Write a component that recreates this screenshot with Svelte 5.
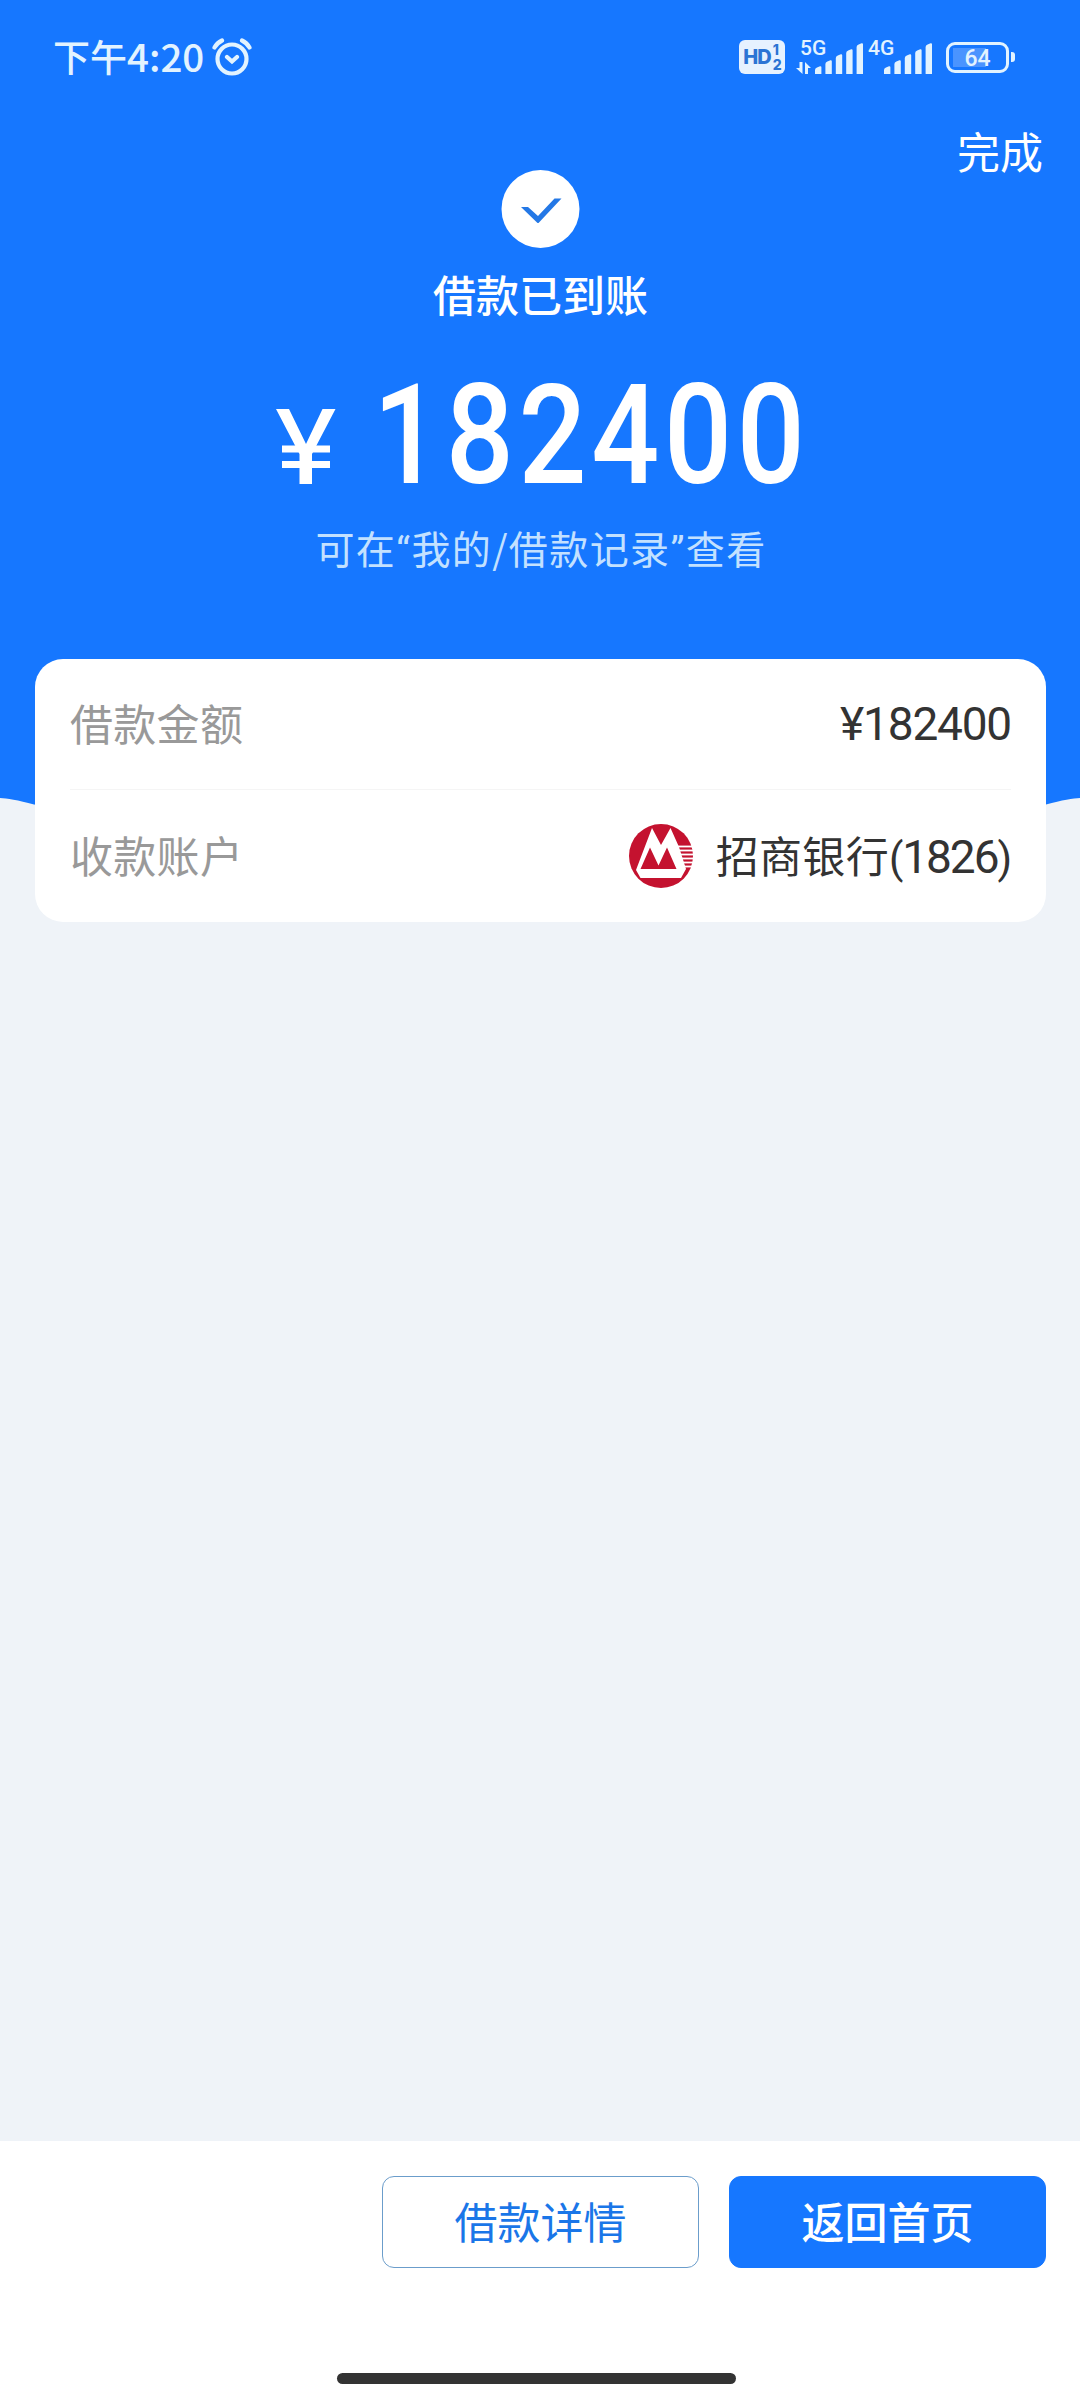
<script>
	const bars = [8, 14, 20, 25, 31];
	const stripes = [22.5, 26.5, 30.5, 34.5, 38.5, 42.5];

	const amount = 182400;
	const account = { bank: '招商银行', tail: '1826' };
</script>

{#snippet signal()}
	<svg class="bars" width="48" height="32" viewBox="0 0 48 32">
		{#each bars as h, i}
			<path d="M{i * 10.4} 32V{36 - h}q0-2 2-2.600l3-1.200q1.400-.300 1.400 1V32z" />
		{/each}
	</svg>
{/snippet}

<div class="page">
	<header class="hero">
		<div class="status">
			<span class="time">下午<b>4:20</b></span>
			<svg class="alarm" width="40" height="38" viewBox="0 0 40 38">
				<circle cx="20" cy="21" r="14.500" />
				<path d="M2.500 9.500Q5 5 10 2.500M37.500 9.500Q35 5 30 2.500M15 19l5 4.500 5-4.500" />
			</svg>
			<span class="spacer"></span>
			<span class="hd">HD<i><em>1</em><em>2</em></i></span>
			<span class="net five">
				<small>5G</small>
				<svg class="arrows" width="15" height="12" viewBox="0 0 15 12"><path d="M6.500 0v12L0 6h3.500V0zM9 12V0l6 6h-3v6z" /></svg>
				{@render signal()}
			</span>
			<span class="net four">
				<small>4G</small>
				{@render signal()}
			</span>
			<span class="battery"><span>64</span></span>
			<span class="nub"></span>
		</div>

		<div class="done">完成</div>

		<div class="result">
			<svg class="check" width="79" height="79" viewBox="0 0 79 79">
				<circle cx="39.500" cy="39" r="39" fill="#fff" />
				<path d="M20 37h7L37 46 53.500 28.500h7L37.500 53h-1z" fill="#2478e6" />
			</svg>
			<h1>借款已到账</h1>
			<div class="amount">
				<svg width="62" height="75" viewBox="0 0 62 75">
					<path d="M1 0h13L31 35 47.500 0h13L37 45v30H24.500V45z" />
					<path d="M7 36.500h48v7H7zM7 52h48v7H7z" />
				</svg>
				<strong>{amount}</strong>
			</div>
			<p>可在<q>“</q>我的/借款记录<q>”</q>查看</p>
		</div>
		<svg class="wave" width="1080" height="52" viewBox="0 0 1080 52">
			<path d="M0 0H1080V8Q1070 8 1046 14.500Q800 52 540 52Q280 52 34 14.500Q10 8 0 8z" />
		</svg>
	</header>

	<section class="card">
		<div class="row">
			<span class="label">借款金额</span>
			<span class="num">¥{amount}</span>
		</div>
		<div class="row">
			<span class="label">收款账户</span>
			<span class="value">
				<svg class="logo" width="64" height="64" viewBox="0 0 64 64">
					<circle cx="32" cy="32" r="32" fill="#c4122f" />
					<path d="M23 4L7 46l4.500 8H52l5-9-7-22-8.500-19L32 21z" fill="#fff" />
					<path d="M11.500 45L21 23.500l8.500 18L38 23.500 47.500 45z" fill="#c4122f" />
					{#each stripes as y, i}
						<path d="M{49 + i} {y}H64" stroke="#fff" stroke-width="1.800" />
					{/each}
				</svg>
				<span class="bank">{account.bank}</span><span class="num tail">(<b>{account.tail}</b>)</span>
			</span>
		</div>
	</section>

	<footer>
		<div class="actions">
			<button>借款详情</button>
			<button class="primary">返回首页</button>
		</div>
		<div class="home"></div>
	</footer>
</div>

<style>
	:global(body) {
		margin: 0;
	}

	.page {
		display: flex;
		flex-direction: column;
		width: 1080px;
		height: 2400px;
		background: #eff3f8;
		font-family: 'Noto Sans CJK SC', sans-serif;
		font-size: 43px;
		line-height: 1;
	}

	.hero {
		display: flex;
		flex-direction: column;
		height: 790px;
		background: #1677ff;
		color: #fff;
	}

	.status {
		display: flex;
		align-items: center;
		height: 114px;
		padding: 0 65px 0 53px;
		box-sizing: border-box;
		color: #e2f3ff;
	}

	.time {
		padding-bottom: 4px;
		font-size: 37px;
		font-weight: 500;
	}

	.time b {
		font-size: 38.5px;
		font-weight: 500;
	}

	.alarm {
		margin-left: 8px;
		fill: none;
		stroke: #e2f3ff;
		stroke-width: 4.2;
		stroke-linecap: round;
	}

	.spacer {
		flex: 1;
	}

	.hd {
		display: flex;
		align-items: center;
		justify-content: center;
		width: 46px;
		height: 34px;
		border-radius: 6px;
		background: #e6f2ff;
		color: #2b74d4;
		font: 800 20px Inter, sans-serif;
		letter-spacing: -1px;
	}

	.hd i {
		display: flex;
		flex-direction: column;
		margin-left: 2px;
		font-style: normal;
		font-size: 14px;
		line-height: 15px;
	}

	.hd em {
		font-style: normal;
	}

	.net {
		display: flex;
		position: relative;
		align-items: flex-end;
		justify-content: flex-end;
		height: 34px;
	}

	.net small {
		position: absolute;
		top: -2px;
		left: 0;
		font: 500 21px/21px Roboto, sans-serif;
	}

	.five {
		width: 67px;
		margin-left: 11px;
	}

	.five small {
		left: 4px;
	}

	.four {
		width: 64px;
		margin-left: 5px;
	}

	.arrows {
		margin-right: 4px;
		flex: none;
	}

	.bars {
		flex: none;
	}

	.bars, .arrows {
		fill: #e2f3ff;
	}

	.battery {
		width: 63px;
		height: 31px;
		margin-left: 14px;
		padding: 3px;
		box-sizing: border-box;
		border: 3px solid #e2f3ff;
		border-radius: 9px;
		text-align: center;
		font: 500 23px/21px Roboto, sans-serif;
		background: linear-gradient(#4a94ff, #4a94ff) 4px 3px / 33px 19px no-repeat;
	}

	.nub {
		width: 4px;
		height: 10px;
		margin-left: 2px;
		border-radius: 0 3px 3px 0;
		background: #e2f3ff;
	}

	.done {
		align-self: flex-end;
		height: 56px;
		margin-right: 37px;
		padding-top: 15px;
		box-sizing: border-box;
	}

	.result {
		display: flex;
		flex-direction: column;
		align-items: center;
	}

	h1 {
		margin: 23px 0 0 1px;
		font-size: 43px;
		font-weight: 500;
		line-height: 43px;
	}

	.amount {
		display: flex;
		align-items: flex-end;
		width: 530px;
		height: 100px;
		margin-top: 69px;
	}

	.amount svg {
		flex: none;
		fill: #fff;
	}

	.amount strong {
		margin: 0 0 -1px 36px;
		font: 500 140px/100px Roboto, sans-serif;
		letter-spacing: 5.5px;
		transform: scaleX(0.855);
		transform-origin: left;
	}

	p {
		margin: 42px 0 0 2px;
		color: #c3e1ff;
		font-size: 39px;
		line-height: 43px;
		letter-spacing: 1.4px;
	}

	q {
		quotes: none;
		font-family: Roboto, sans-serif;
	}

	.wave {
		flex: none;
		margin-top: auto;
		margin-bottom: -52px;
		fill: #1677ff;
	}

	.card {
		position: relative;
		margin: -131px 34px 0 35px;
		padding: 0 35px;
		border-radius: 28px;
		background: #fff;
		color: #333;
	}

	.row {
		display: flex;
		align-items: center;
		justify-content: space-between;
		height: 130px;
	}

	.row + .row {
		height: 132px;
		border-top: 1px solid #f5f5f5;
	}

	.label, .bank {
		padding-bottom: 3px;
		letter-spacing: 0.3px;
	}

	.label {
		color: #999;
	}

	.value {
		display: flex;
		align-items: center;
	}

	.logo {
		margin-right: 23px;
	}

	.num {
		font-family: Roboto, sans-serif;
		font-size: 46px;
		letter-spacing: -1.2px;
	}

	.tail {
		padding-top: 2px;
		font-size: 42px;
	}

	.tail b {
		font-size: 46px;
		font-weight: 400;
		letter-spacing: -2px;
	}

	footer {
		display: flex;
		flex-direction: column;
		height: 259px;
		margin-top: auto;
		background: #fff;
	}

	.actions {
		display: flex;
		justify-content: flex-end;
		gap: 30px;
		padding: 35px 34px 0 0;
	}

	button {
		width: 317px;
		height: 92px;
		padding: 0 0 4px;
		border: 1px solid #6b9dcb;
		border-radius: 12px;
		background: #fff;
		color: #1a76e8;
		font: 400 43px/1 'Noto Sans CJK SC', sans-serif;
	}

	.primary {
		border-color: #1677ff;
		background: #1677ff;
		color: #fff;
		font-weight: 500;
	}

	.home {
		width: 399px;
		height: 11px;
		margin: auto auto 16px 337px;
		border-radius: 6px;
		background: #333;
	}
</style>
